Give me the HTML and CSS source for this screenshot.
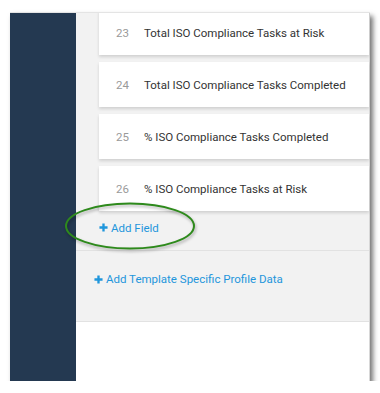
FILE: index.html
```html
<!DOCTYPE html>
<html lang="en">
<head>
  <meta charset="UTF-8">
  <meta name="viewport" content="width=device-width, initial-scale=1.0">
  <title>Profile Fields</title>
  <link rel="stylesheet" href="styles.css">
</head>
<body>

  <div class="frame">
    <div class="sidebar"></div>

    <div class="main">
      <div class="fields">
        <div class="field-card">
          <span class="field-num">23</span>
          <span class="field-name">Total ISO Compliance Tasks at Risk</span>
        </div>
        <div class="field-card">
          <span class="field-num">24</span>
          <span class="field-name">Total ISO Compliance Tasks Completed</span>
        </div>
        <div class="field-card">
          <span class="field-num">25</span>
          <span class="field-name">% ISO Compliance Tasks Completed</span>
        </div>
        <div class="field-card">
          <span class="field-num">26</span>
          <span class="field-name">% ISO Compliance Tasks at Risk</span>
        </div>

        <a class="add-link add-field" href="#">
          <svg class="plus" viewBox="0 0 10 10"><path d="M5 0.5v9M0.5 5h9"/></svg>
          Add Field
        </a>
      </div>

      <div class="template-data">
        <a class="add-link" href="#">
          <svg class="plus" viewBox="0 0 10 10"><path d="M5 0.5v9M0.5 5h9"/></svg>
          Add Template Specific Profile Data
        </a>
      </div>

      <div class="main-footer"></div>
    </div>
  </div>

  <!-- annotation ring drawn on the screenshot -->
  <svg class="callout" viewBox="0 0 136 52">
    <ellipse cx="67" cy="25" rx="64" ry="22.5" />
  </svg>

</body>
</html>
```

FILE: styles.css
```css
body {
  margin: 0;
  background-color: #ffffff;
  font-family: Roboto, "Liberation Sans", sans-serif;
}

.frame {
  display: flex;
  width: 360px;
  height: 369px;
  margin: 12px 0 0 10px;
  border-top: 1px solid #e4e4e4;
  box-sizing: border-box;
  overflow: hidden;
  box-shadow: 3px 4px 5px rgba(0, 0, 0, 0.55);
}

.sidebar {
  width: 66px;
  flex-shrink: 0;
  background-color: #243951;
}

.main {
  flex: 1;
  display: flex;
  flex-direction: column;
  background-color: #ffffff;
  border-right: 1px solid #d8d8d8;
}

.fields {
  background-color: #f2f2f2;
  padding: 0 0 0 23px;
  margin-top: -3px;
  border-bottom: 1px solid #e2e2e2;
}

.field-card {
  display: flex;
  align-items: center;
  height: 45px;
  margin-bottom: 7px;
  background-color: #ffffff;
  box-shadow: 0 2px 3px rgba(0, 0, 0, 0.14);
  font-size: 11.5px;
}

.field-num {
  width: 28px;
  padding-left: 17px;
  color: #9a9a9a;
}

.field-name {
  color: #333333;
  white-space: nowrap;
}

.add-link {
  display: flex;
  align-items: center;
  gap: 3px;
  color: #1f96dc;
  font-size: 11.5px;
  text-decoration: none;
}

.plus {
  width: 9px;
  height: 9px;
  stroke: #1f96dc;
  stroke-width: 2.6;
  fill: none;
}

.add-field {
  height: 37px;
  margin-top: -5px;
  padding-bottom: 8px;
  box-sizing: border-box;
}

.template-data {
  background-color: #f2f2f2;
  height: 71px;
  padding: 21px 0 0 18px;
  box-sizing: border-box;
  border-bottom: 1px solid #e2e2e2;
}

.main-footer {
  flex: 1;
  background-color: #ffffff;
}

.callout {
  position: absolute;
  left: 63px;
  top: 201px;
  width: 136px;
  height: 52px;
  overflow: visible;
}

.callout ellipse {
  fill: none;
  stroke: #2e8a1c;
  stroke-width: 2;
  filter: drop-shadow(1px 2px 1.5px rgba(0, 0, 0, 0.3));
}
```
